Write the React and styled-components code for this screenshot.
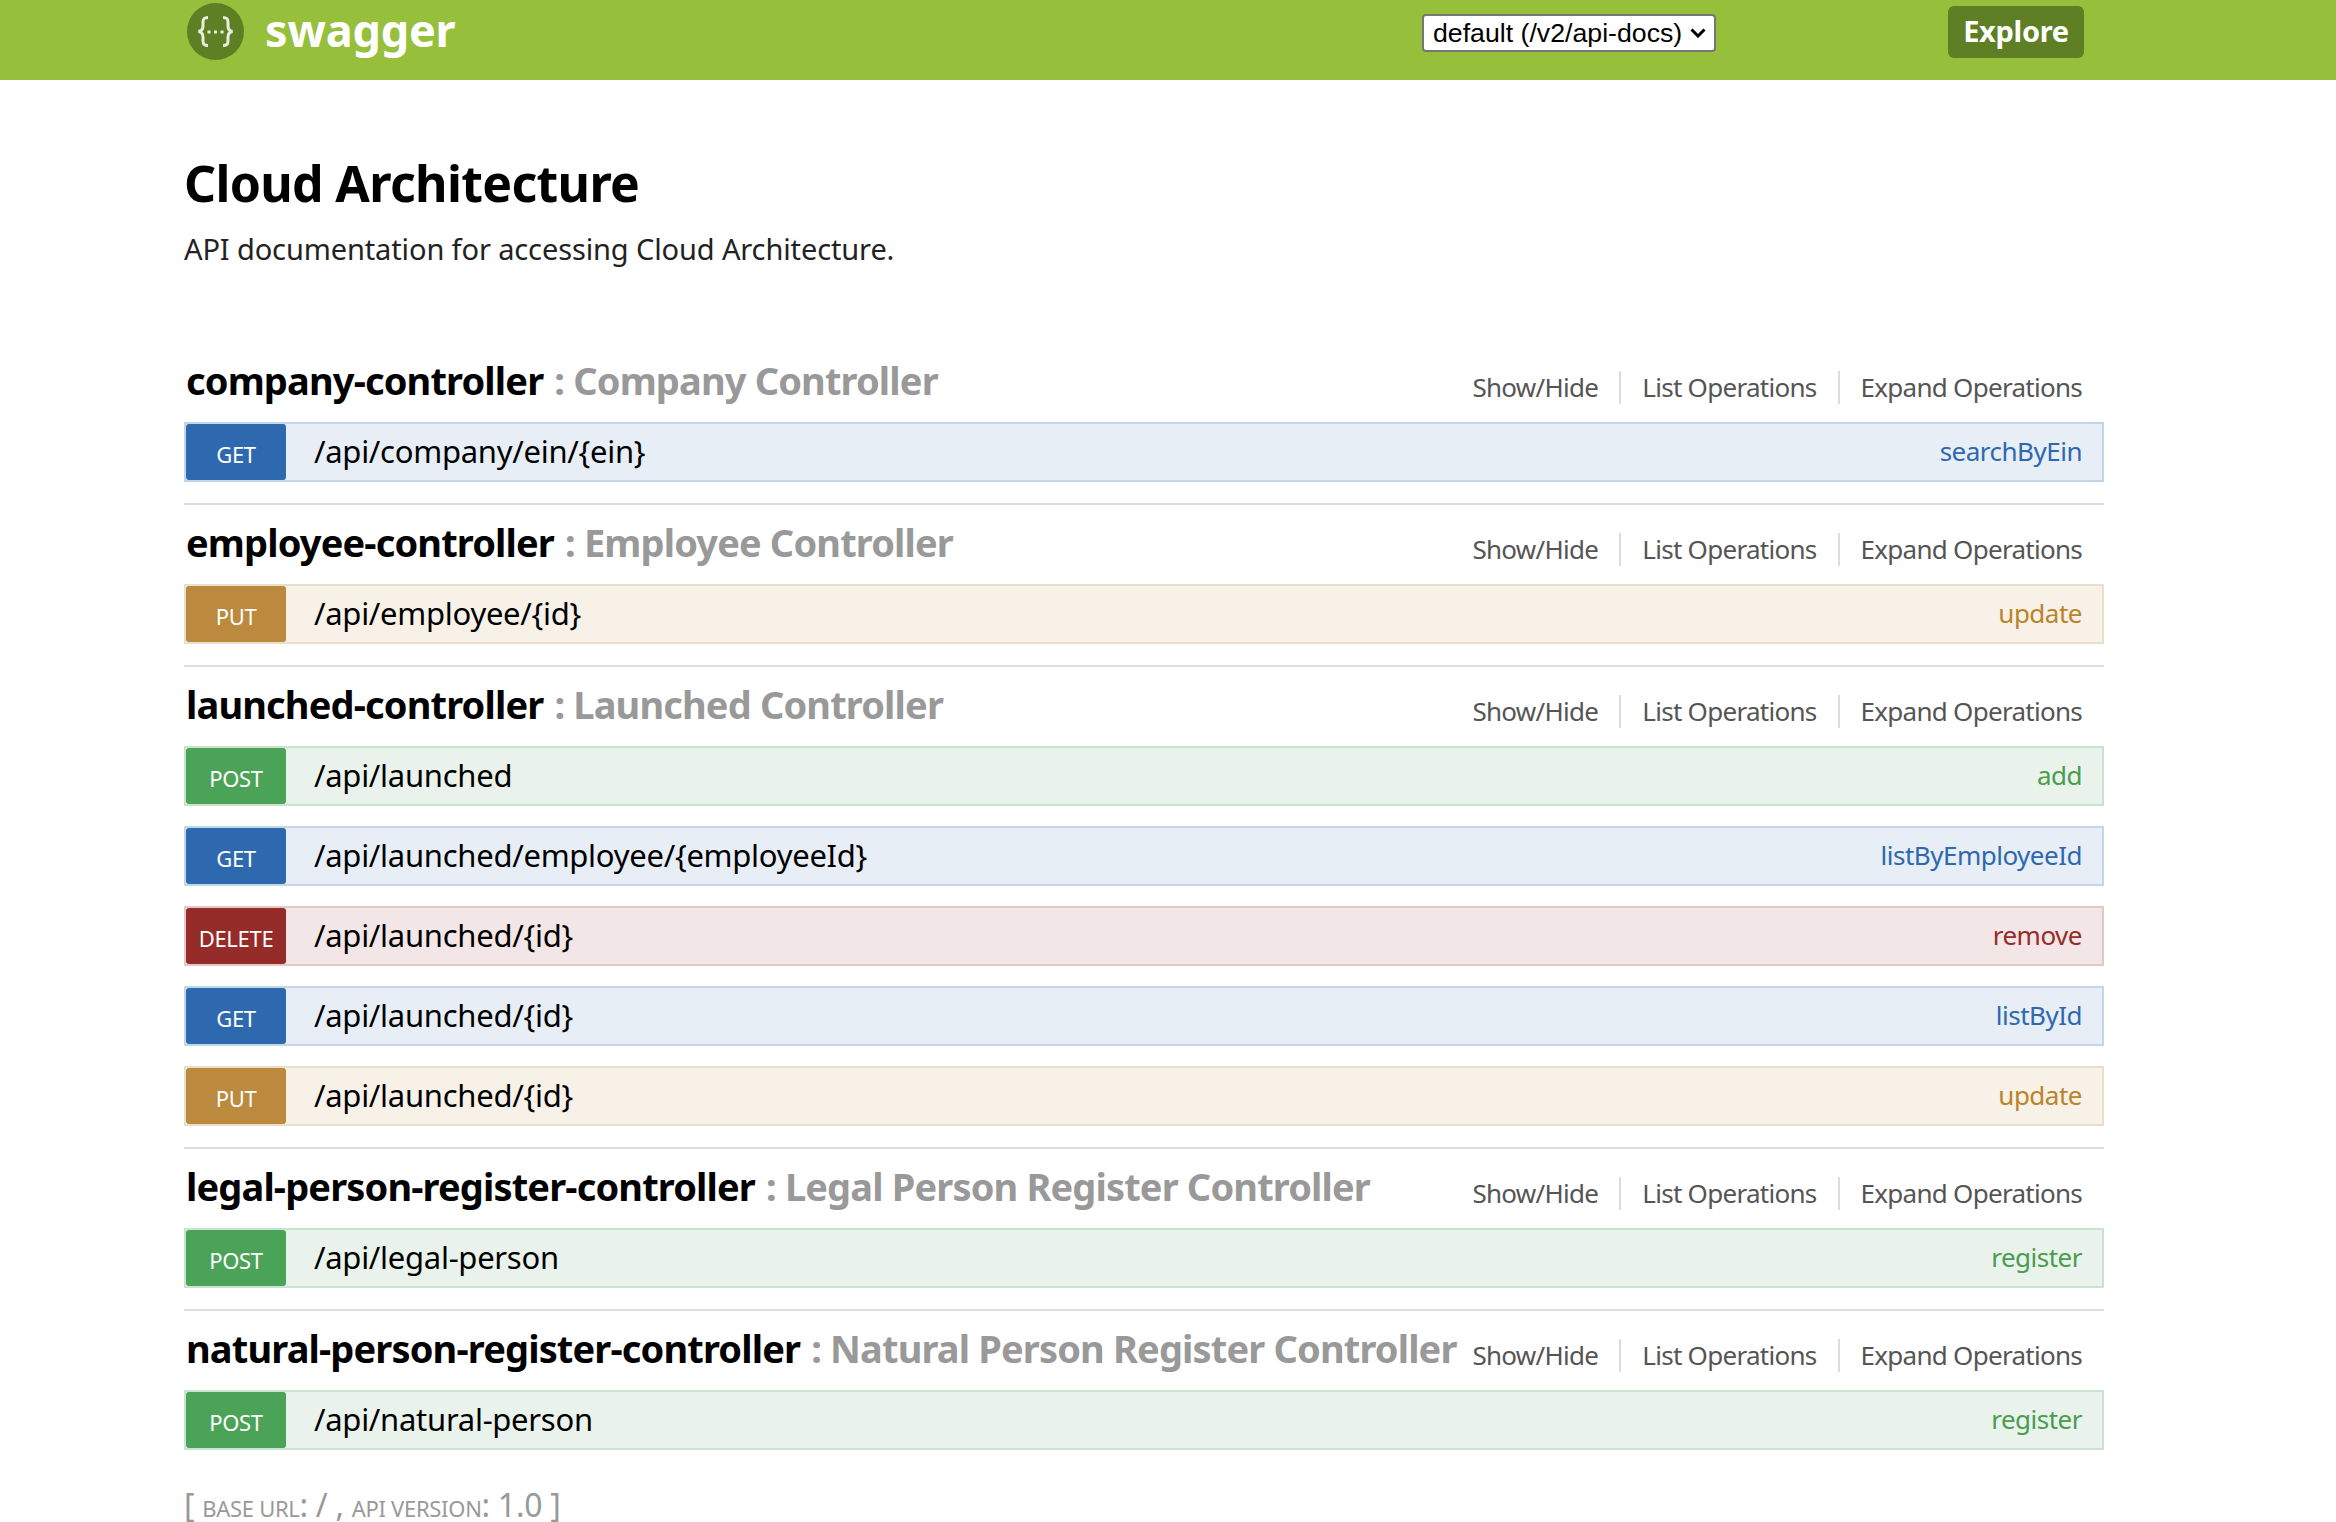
import styled, { createGlobalStyle } from "styled-components";

const GlobalStyle = createGlobalStyle`
  html, body {
    margin: 0;
    padding: 0;
    background: #fff;
    font-family: "Noto Sans", "Open Sans", sans-serif;
  }
`;

const methodColors = {
  GET: { bg: "#e7eef6", border: "#c3d5e8", solid: "#2e68af", text: "#2e68af" },
  POST: { bg: "#e9f3eb", border: "#c8e3ce", solid: "#4ba358", text: "#4a9c50" },
  PUT: { bg: "#f7f1e8", border: "#eadfcb", solid: "#bb8a3f", text: "#bb8428" },
  DELETE: { bg: "#f3e6e6", border: "#e3c8c8", solid: "#952c2a", text: "#952c2a" },
};

const chevron =
  "data:image/svg+xml,%3Csvg xmlns='http://www.w3.org/2000/svg' width='16' height='10' viewBox='0 0 16 10'%3E%3Cpath d='M1.500 1.500 8 8l6.500-6.500' fill='none' stroke='%23000' stroke-width='3'/%3E%3C/svg%3E";

const Header = styled.header`
  height: 80px;
  background: #96bf3c;
  display: flex;
  align-items: center;
  padding: 0 252px 0 187px;
`;

const Brand = styled.div`
  display: flex;
  align-items: center;
  gap: 21px;
  margin-top: -18px;
  margin-right: auto;
`;

const BrandName = styled.span`
  font-size: 45px;
  font-weight: 700;
  letter-spacing: -0.2px;
  color: #fff;
  line-height: 55px;
  margin-top: -3px;
`;

const VersionSelect = styled.select`
  appearance: none;
  width: 294px;
  height: 38px;
  margin-top: -14px;
  margin-right: 232px;
  font-family: "Liberation Sans", Arial, sans-serif;
  font-size: 26.700px;
  color: #000;
  background: #fff url("${chevron}") no-repeat right 8px center;
  border: 2px solid #767676;
  border-radius: 4px;
  padding: 0 0 0 9px;
`;

const ExploreButton = styled.button`
  width: 136px;
  height: 52px;
  margin-top: -16px;
  border: 0;
  border-radius: 6px;
  background: #5e7f24;
  color: #fff;
  font-family: "Noto Sans", sans-serif;
  font-size: 29px;
  font-weight: 700;
  letter-spacing: -0.3px;
  padding: 0 0 3px;
`;

const Content = styled.main`
  padding: 0 232px 0 184px;
`;

const Info = styled.section`
  padding-top: 68px;
  margin-bottom: 87px;
`;

const Title = styled.h1`
  margin: 0;
  font-size: 50px;
  line-height: 70px;
  font-weight: 700;
  letter-spacing: -0.67px;
  color: #000;
`;

const Description = styled.p`
  margin: 11px 0 0;
  font-size: 29px;
  line-height: 40px;
  letter-spacing: -0.12px;
  color: #222;
`;

const Resource = styled.section`
  padding-bottom: ${({ $last }) => ($last ? "0" : "21px")};
  margin-bottom: ${({ $last }) => ($last ? "0" : "13px")};
  border-bottom: ${({ $last }) => ($last ? "0" : "2px solid #ddd")};
`;

const ResourceHead = styled.div`
  height: 66px;
  box-sizing: border-box;
  display: flex;
  align-items: center;
  justify-content: space-between;
  padding: 0 22px 19px 2px;
`;

const ResourceName = styled.h2`
  flex: 1;
  min-width: 0;
  margin: 0;
  font-size: 38px;
  line-height: 50px;
  font-weight: 700;
  letter-spacing: -0.85px;
  word-spacing: 2px;
  color: #000;
  white-space: nowrap;
`;

const ResourceDesc = styled.span`
  color: #999;
  word-spacing: 0;
`;

const Ops = styled.ul`
  list-style: none;
  margin: 16px 0 0;
  padding: 0;
  display: flex;
  flex: none;
`;

const Op = styled.li`
  font-size: 26px;
  line-height: 33px;
  letter-spacing: -0.72px;
  color: #555;
  white-space: nowrap;
  padding: 0 21px;
  border-left: 2px solid #ddd;

  &:first-child {
    border-left: 0;
  }

  &:last-child {
    padding-right: 0;
  }
`;

const Rows = styled.div`
  display: flex;
  flex-direction: column;
  gap: 20px;
`;

const Row = styled.div`
  height: 60px;
  box-sizing: border-box;
  display: flex;
  align-items: center;
  background: ${({ $method }) => methodColors[$method].bg};
  border: 2px solid ${({ $method }) => methodColors[$method].border};
`;

const Method = styled.span`
  width: 100px;
  height: 56px;
  flex: none;
  display: flex;
  align-items: center;
  justify-content: center;
  padding-top: 4px;
  box-sizing: border-box;
  border-radius: 3px;
  background: ${({ $method }) => methodColors[$method].solid};
  color: #fff;
  font-size: 22px;
  letter-spacing: -0.3px;
`;

const Path = styled.span`
  margin: -2px 0 0 28px;
  font-size: 31px;
  letter-spacing: -0.28px;
  color: #000;
`;

const Nickname = styled.span`
  margin: -2px 0 0 auto;
  padding-right: 20px;
  font-size: 26px;
  letter-spacing: -0.5px;
  color: ${({ $method }) => methodColors[$method].text};
`;

const Footer = styled.footer`
  margin-top: 33px;
  font-size: 32px;
  line-height: 44px;
  letter-spacing: -0.3px;
  color: #999;
`;

const SmallCaps = styled.span`
  font-size: 22px;
`;

const resources = [
  {
    name: "company-controller",
    desc: "Company Controller",
    ops: [{ method: "GET", path: "/api/company/ein/{ein}", nick: "searchByEin" }],
  },
  {
    name: "employee-controller",
    desc: "Employee Controller",
    ops: [{ method: "PUT", path: "/api/employee/{id}", nick: "update" }],
  },
  {
    name: "launched-controller",
    desc: "Launched Controller",
    ops: [
      { method: "POST", path: "/api/launched", nick: "add" },
      { method: "GET", path: "/api/launched/employee/{employeeId}", nick: "listByEmployeeId" },
      { method: "DELETE", path: "/api/launched/{id}", nick: "remove" },
      { method: "GET", path: "/api/launched/{id}", nick: "listById" },
      { method: "PUT", path: "/api/launched/{id}", nick: "update" },
    ],
  },
  {
    name: "legal-person-register-controller",
    desc: "Legal Person Register Controller",
    ops: [{ method: "POST", path: "/api/legal-person", nick: "register" }],
  },
  {
    name: "natural-person-register-controller",
    desc: "Natural Person Register Controller",
    ops: [{ method: "POST", path: "/api/natural-person", nick: "register" }],
  },
];

function Logo() {
  return (
    <svg width="57" height="57" viewBox="0 0 57 57">
      <circle cx="28.500" cy="28.500" r="28.500" fill="#5e7f24" />
      <path
        d="M21 14.500c-4 0-5 1.500-5 4.500v4c0 3-1.500 5-4.500 5.500 3 .5 4.500 2.500 4.500 5.500v4c0 3 1 4.500 5 4.500M36 14.500c4 0 5 1.500 5 4.500v4c0 3 1.500 5 4.500 5.500-3 .5-4.500 2.500-4.500 5.500v4c0 3-1 4.500-5 4.500"
        fill="none"
        stroke="#e8eedc"
        strokeWidth="3"
      />
      <path d="M20.500 27.500h3v3h-3zM27 27.500h3v3h-3zM33.500 27.500h3v3h-3z" fill="#e8eedc" />
    </svg>
  );
}

export default function App() {
  return (
    <>
      <GlobalStyle />
      <Header>
        <Brand>
          <Logo />
          <BrandName>swagger</BrandName>
        </Brand>
        <VersionSelect defaultValue="default">
          <option value="default">default (/v2/api-docs)</option>
        </VersionSelect>
        <ExploreButton>Explore</ExploreButton>
      </Header>
      <Content>
        <Info>
          <Title>Cloud Architecture</Title>
          <Description>API documentation for accessing Cloud Architecture.</Description>
        </Info>
        {resources.map((resource, index) => (
          <Resource key={resource.name} $last={index === resources.length - 1}>
            <ResourceHead>
              <ResourceName>
                {resource.name} <ResourceDesc>: {resource.desc}</ResourceDesc>
              </ResourceName>
              <Ops>
                <Op>Show/Hide</Op>
                <Op>List Operations</Op>
                <Op>Expand Operations</Op>
              </Ops>
            </ResourceHead>
            <Rows>
              {resource.ops.map((op) => (
                <Row key={op.method + op.path} $method={op.method}>
                  <Method $method={op.method}>{op.method}</Method>
                  <Path>{op.path}</Path>
                  <Nickname $method={op.method}>{op.nick}</Nickname>
                </Row>
              ))}
            </Rows>
          </Resource>
        ))}
        <Footer>
          [ <SmallCaps>BASE URL</SmallCaps>: / , <SmallCaps>API VERSION</SmallCaps>: 1.0 ]
        </Footer>
      </Content>
    </>
  );
}
